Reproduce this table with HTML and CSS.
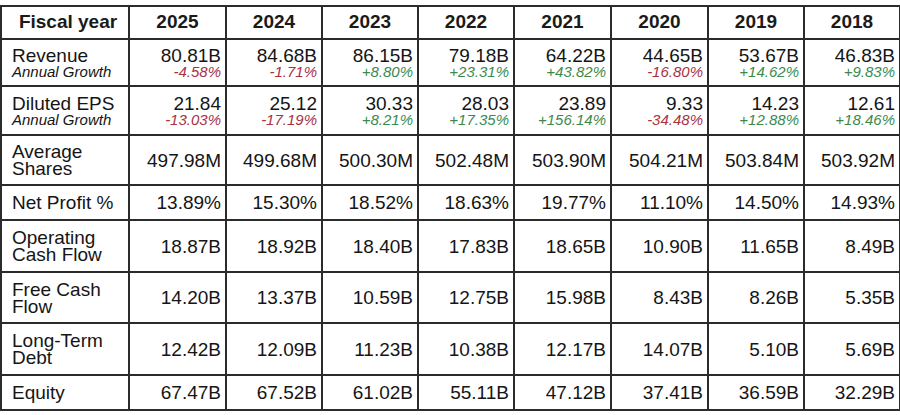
FILE: index.html
```html
<!DOCTYPE html>
<html lang="en">
<head>
<meta charset="utf-8">
<title>Fiscal data</title>
<link rel="stylesheet" href="styles.css">
</head>
<body>
<table class="fin">
  <colgroup>
    <col class="c-label"><col class="c97"><col class="c96"><col class="c96"><col class="c96"><col class="c97"><col class="c97"><col class="c96"><col class="c95">
  </colgroup>
  <thead>
    <tr class="r-head">
      <th class="h-label">Fiscal year</th><th>2025</th><th>2024</th><th>2023</th><th>2022</th><th>2021</th><th>2020</th><th>2019</th><th>2018</th>
    </tr>
  </thead>
  <tbody>
    <tr class="r-rev">
      <td class="lbl"><div class="two">Revenue</div><div class="sub">Annual Growth</div></td>
      <td><div class="v">80.81B</div><div class="g neg">-4.58%</div></td>
      <td><div class="v">84.68B</div><div class="g neg">-1.71%</div></td>
      <td><div class="v">86.15B</div><div class="g pos">+8.80%</div></td>
      <td><div class="v">79.18B</div><div class="g pos">+23.31%</div></td>
      <td><div class="v">64.22B</div><div class="g pos">+43.82%</div></td>
      <td><div class="v">44.65B</div><div class="g neg">-16.80%</div></td>
      <td><div class="v">53.67B</div><div class="g pos">+14.62%</div></td>
      <td><div class="v">46.83B</div><div class="g pos">+9.83%</div></td>
    </tr>
    <tr class="r-eps">
      <td class="lbl"><div class="two">Diluted EPS</div><div class="sub">Annual Growth</div></td>
      <td><div class="v">21.84</div><div class="g neg">-13.03%</div></td>
      <td><div class="v">25.12</div><div class="g neg">-17.19%</div></td>
      <td><div class="v">30.33</div><div class="g pos">+8.21%</div></td>
      <td><div class="v">28.03</div><div class="g pos">+17.35%</div></td>
      <td><div class="v">23.89</div><div class="g pos">+156.14%</div></td>
      <td><div class="v">9.33</div><div class="g neg">-34.48%</div></td>
      <td><div class="v">14.23</div><div class="g pos">+12.88%</div></td>
      <td><div class="v">12.61</div><div class="g pos">+18.46%</div></td>
    </tr>
    <tr class="r-avg">
      <td class="lbl"><div class="two">Average<br>Shares</div></td>
      <td>497.98M</td><td>499.68M</td><td>500.30M</td><td>502.48M</td><td>503.90M</td><td>504.21M</td><td>503.84M</td><td>503.92M</td>
    </tr>
    <tr class="r-npm">
      <td class="lbl">Net Profit %</td>
      <td>13.89%</td><td>15.30%</td><td>18.52%</td><td>18.63%</td><td>19.77%</td><td>11.10%</td><td>14.50%</td><td>14.93%</td>
    </tr>
    <tr class="r-ocf">
      <td class="lbl"><div class="two">Operating<br>Cash Flow</div></td>
      <td>18.87B</td><td>18.92B</td><td>18.40B</td><td>17.83B</td><td>18.65B</td><td>10.90B</td><td>11.65B</td><td>8.49B</td>
    </tr>
    <tr class="r-fcf">
      <td class="lbl"><div class="two">Free Cash<br>Flow</div></td>
      <td>14.20B</td><td>13.37B</td><td>10.59B</td><td>12.75B</td><td>15.98B</td><td>8.43B</td><td>8.26B</td><td>5.35B</td>
    </tr>
    <tr class="r-ltd">
      <td class="lbl"><div class="two">Long-Term<br>Debt</div></td>
      <td>12.42B</td><td>12.09B</td><td>11.23B</td><td>10.38B</td><td>12.17B</td><td>14.07B</td><td>5.10B</td><td>5.69B</td>
    </tr>
    <tr class="r-eq">
      <td class="lbl">Equity</td>
      <td>67.47B</td><td>67.52B</td><td>61.02B</td><td>55.11B</td><td>47.12B</td><td>37.41B</td><td>36.59B</td><td>32.29B</td>
    </tr>
  </tbody>
</table>
</body>
</html>
```
FILE: styles.css
```css
html, body {
  margin: 0;
  background: #fff;
}
body {
  padding: 5px 0 0 0;
  font-family: "Liberation Sans", Arial, sans-serif;
  color: #151515;
}
.fin {
  border-collapse: collapse;
  table-layout: fixed;
  width: 898px;
  margin-left: 0;
}
.c-label { width: 128px; }
.c97 { width: 97px; }
.c96 { width: 96px; }
.c95 { width: 96px; }
.fin th, .fin td {
  border: 2px solid #2b2b2b;
  padding: 0 4px 0 4px;
  font-size: 19px;
  line-height: 19px;
  text-align: right;
  vertical-align: middle;
  white-space: nowrap;
}
.fin th {
  text-align: center;
  font-weight: bold;
  color: #1a1a1a;
  padding-bottom: 3px;
}
.fin th.h-label {
  padding-left: 10px;
}
.fin td.lbl {
  text-align: left;
  padding-left: 10px;
}
.two {
  line-height: 17px;
}
.v {
  line-height: 17px;
}
.sub {
  font-style: italic;
  font-size: 15px;
  line-height: 15px;
}
.g {
  font-style: italic;
  font-size: 15px;
  line-height: 15px;
}
.neg { color: #a8323f; }
.pos { color: #3b8a4c; }
.r-head { height: 33px; }
.r-rev { height: 47px; }
.r-eps { height: 49px; }
.r-avg { height: 50px; }
.r-npm { height: 35px; }
.r-ocf { height: 52px; }
.r-fcf { height: 51px; }
.r-ltd { height: 52px; }
.r-eq { height: 35px; }
```
